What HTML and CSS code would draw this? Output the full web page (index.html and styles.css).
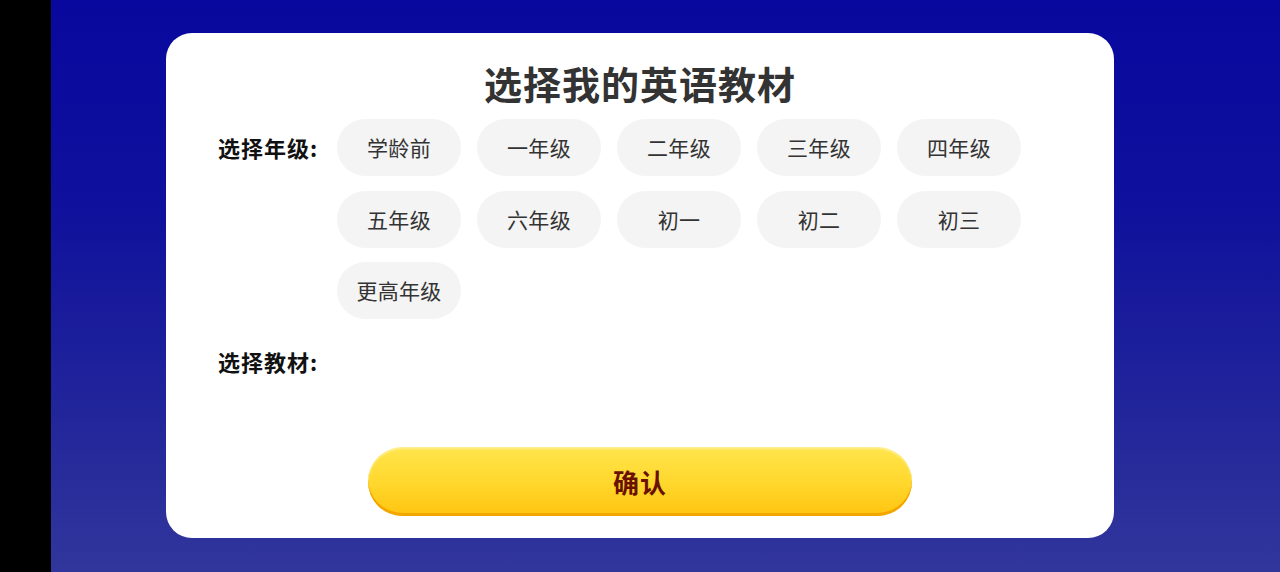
FILE: index.html
```html
<!DOCTYPE html>
<html lang="zh-CN">
<head>
<meta charset="utf-8">
<title>选择我的英语教材</title>
<link rel="stylesheet" href="styles.css">
</head>
<body>
<div class="screen">
  <div class="side"></div>
  <main class="stage">
    <section class="card">
      <h1 class="title">选择我的英语教材</h1>
      <div class="row">
        <div class="label">选择年级:</div>
        <div class="chips">
          <div class="chip">学龄前</div>
          <div class="chip">一年级</div>
          <div class="chip">二年级</div>
          <div class="chip">三年级</div>
          <div class="chip">四年级</div>
          <div class="chip">五年级</div>
          <div class="chip">六年级</div>
          <div class="chip">初一</div>
          <div class="chip">初二</div>
          <div class="chip">初三</div>
          <div class="chip">更高年级</div>
        </div>
      </div>
      <div class="row row-book">
        <div class="label">选择教材:</div>
        <div class="chips"></div>
      </div>
      <div class="actions">
        <button class="confirm">确认</button>
      </div>
    </section>
  </main>
</div>
</body>
</html>
```

FILE: styles.css
```css
html, body {
  margin: 0;
  padding: 0;
  height: 100%;
}
body {
  font-family: "Noto Sans CJK SC", "Noto Sans", sans-serif;
  background: #000;
  overflow: hidden;
}
.screen {
  display: flex;
  height: 572px;
}
.side {
  width: 51px;
  flex: none;
  background: #000;
}
.stage {
  flex: 1;
  background: linear-gradient(180deg, #08089e 0%, #0f109c 35%, #23279a 75%, #31369c 100%);
  padding-top: 33px;
  box-sizing: border-box;
}
.card {
  margin-left: 115px;
  width: 948px;
  height: 505px;
  box-sizing: border-box;
  background: #fff;
  border-radius: 26px;
  padding: 27px 52px 0;
  display: flex;
  flex-direction: column;
}
.title {
  margin: 0;
  text-align: center;
  font-size: 38px;
  line-height: 46px;
  font-weight: 700;
  color: #333;
  letter-spacing: 1px;
}
.row {
  display: flex;
  margin-top: 13px;
}
.row-book {
  margin-top: 14px;
  min-height: 57px;
}
.label {
  width: 119px;
  flex: none;
  font-size: 22px;
  font-weight: 700;
  line-height: 57px;
  height: 57px;
  color: #111;
  letter-spacing: 1px;
}
.chips {
  display: grid;
  grid-template-columns: repeat(5, 124px);
  column-gap: 16px;
  row-gap: 14.5px;
}
.chip {
  height: 57px;
  border-radius: 29px;
  background: #f4f4f4;
  color: #333;
  font-size: 21px;
  line-height: 57px;
  text-align: center;
  letter-spacing: 0.3px;
}
.actions {
  display: flex;
  justify-content: center;
  margin-top: 57px;
}
.confirm {
  width: 544px;
  height: 69px;
  border: none;
  border-radius: 35px;
  background: linear-gradient(180deg, #ffe54c 0%, #ffd82e 50%, #ffc40f 100%);
  box-shadow: inset 0 -3px 0 #f3a500, inset 0 2px 2px rgba(255,255,255,0.4);
  font-family: "Noto Sans CJK SC", "Noto Sans", sans-serif;
  font-size: 26px;
  font-weight: 700;
  color: #6a1100;
  padding: 0;
  letter-spacing: 1px;
}
```
